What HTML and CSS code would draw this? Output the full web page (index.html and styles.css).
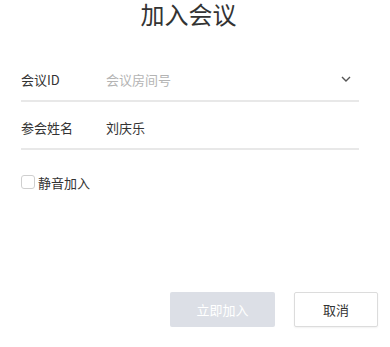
FILE: index.html
```html
<!DOCTYPE html>
<html lang="zh-CN">
<head>
    <meta charset="UTF-8">
    <meta name="viewport" content="width=device-width, initial-scale=1.0">
    <title>加入会议</title>
    <link rel="stylesheet" href="styles.css">
</head>
<body>
    <div class="join-dialog">
        <h1 class="join-title">加入会议</h1>
        <form id="join-form" class="join-form">
            <div class="form-row">
                <label class="form-label" for="meeting-id">会议ID</label>
                <input type="text" id="meeting-id" class="form-input" placeholder="会议房间号">
                <span class="select-arrow">
                    <svg width="10" height="6" viewBox="0 0 10 6"><path d="M1 1l4 4 4-4" fill="none" stroke="#555" stroke-width="1.4"/></svg>
                </span>
            </div>
            <div class="form-row">
                <label class="form-label" for="user-name">参会姓名</label>
                <input type="text" id="user-name" class="form-input" value="刘庆乐">
            </div>
            <label class="mute-option">
                <span class="check-box"></span>
                <span>静音加入</span>
            </label>
            <div class="form-actions">
                <button type="submit" class="btn btn-primary" disabled>立即加入</button>
                <button type="button" class="btn btn-cancel">取消</button>
            </div>
        </form>
    </div>
</body>
</html>
```

FILE: styles.css
```css
* {
    margin: 0;
    padding: 0;
    box-sizing: border-box;
}

body {
    font-family: "Noto Sans CJK SC", "Noto Sans", sans-serif;
    background: white;
    color: #333;
    width: 390px;
    height: 347px;
}

.join-dialog {
    display: flex;
    flex-direction: column;
}

.join-title {
    font-size: 24px;
    font-weight: 400;
    line-height: 28px;
    height: 28px;
    text-align: center;
    padding-right: 13px;
    color: #333;
    margin-bottom: 26px;
}

.join-form {
    display: flex;
    flex-direction: column;
}

.form-row {
    display: flex;
    align-items: center;
    height: 48px;
    padding-top: 4px;
    margin: 0 31px 0 21px;
    border-bottom: 2px solid #e8e8e8;
}

.form-label {
    width: 85px;
    font-size: 13px;
    color: #333;
}

.form-input {
    flex: 1;
    border: none;
    outline: none;
    font-family: inherit;
    font-size: 13px;
    color: #333;
    background: transparent;
}

.form-input::placeholder {
    color: #b4b4b4;
}

.select-arrow {
    display: flex;
    margin-right: 8px;
}

.mute-option {
    display: flex;
    align-items: center;
    gap: 3px;
    margin: 23px 0 0 21px;
    height: 18px;
    font-size: 13px;
    color: #333;
}

.check-box {
    width: 14px;
    height: 14px;
    border: 1px solid #cfcfcf;
    border-radius: 3px;
    background: white;
}

.form-actions {
    display: flex;
    justify-content: flex-end;
    gap: 19px;
    margin-top: 101px;
    padding-right: 12px;
}

.btn {
    height: 35px;
    font-family: inherit;
    font-size: 13px;
    border-radius: 2px;
    cursor: pointer;
}

.btn-primary {
    width: 105px;
    background: #dcdfe6;
    color: white;
    border: none;
}

.btn-cancel {
    width: 84px;
    background: white;
    color: #333;
    border: 1px solid #dcdcdc;
    box-shadow: 0 1px 2px rgba(0, 0, 0, 0.06);
}
```
